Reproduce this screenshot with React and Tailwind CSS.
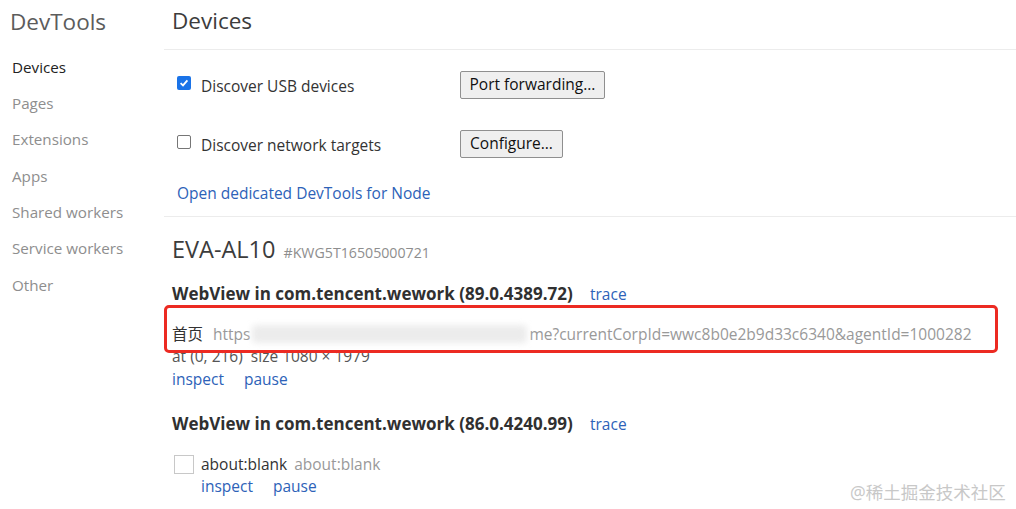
import React from "react";

const font = { fontFamily: '"Open Sans", "Noto Sans CJK SC", sans-serif' };

function NavItem({ label, active }) {
  return (
    <div
      className={`h-[36.3px] flex items-center pl-[12px] text-[15.2px] ${
        active ? "text-[#222]" : "text-[#8e8e8e]"
      }`}
    >
      {label}
    </div>
  );
}

function Checkbox({ checked }) {
  return checked ? (
    <span className="w-[14px] h-[14px] rounded-[2px] bg-[#1a73e8] flex items-center justify-center">
      <svg width="10" height="10" viewBox="0 0 10 10">
        <path d="M1.6 5.2 L4 7.4 L8.4 2.4" stroke="#fff" strokeWidth="1.8" fill="none" />
      </svg>
    </span>
  ) : (
    <span className="w-[14px] h-[14px] rounded-[2px] border border-[#767676] bg-white" />
  );
}

function Btn({ children, w }) {
  return (
    <button
      className={`${w} h-[28px] border border-[#8f8f8f] rounded-[2px] bg-[#efefef] text-[15.5px] text-[#111] flex items-center justify-center`}
    >
      {children}
    </button>
  );
}

export default function App() {
  return (
    <div className="w-[1016px] h-[509px] bg-white flex overflow-hidden relative" style={font}>
      {/* Sidebar */}
      <aside className="w-[164px] shrink-0">
        <h1 className="pl-[10px] pt-[6px] h-[48px] text-[22.5px] text-[#5c5c5c] leading-[32px]">DevTools</h1>
        <nav className="pt-[1px]">
          <NavItem label="Devices" active />
          <NavItem label="Pages" />
          <NavItem label="Extensions" />
          <NavItem label="Apps" />
          <NavItem label="Shared workers" />
          <NavItem label="Service workers" />
          <NavItem label="Other" />
        </nav>
      </aside>

      {/* Main */}
      <main className="flex-1 relative">
        <div className="pl-[8px] border-b border-[#ececec] h-[50px] pt-[6px]">
          <h2 className="text-[22.5px] text-[#3c3c3c] leading-[30px]">Devices</h2>
        </div>

        <div className="pl-[13px] pt-[21px]">
          <div className="flex items-center h-[28px]">
            <div className="w-[24px] flex items-center -mt-[4px]">
              <Checkbox checked />
            </div>
            <span className="w-[259px] text-[15.5px] text-[#333] pt-[3px]">Discover USB devices</span>
            <Btn w="w-[145px]">Port forwarding...</Btn>
          </div>
          <div className="flex items-center h-[28px] mt-[31px]">
            <div className="w-[24px] flex items-center -mt-[4px]">
              <Checkbox />
            </div>
            <span className="w-[259px] text-[15.5px] text-[#333] pt-[3px]">Discover network targets</span>
            <Btn w="w-[103px]">Configure...</Btn>
          </div>
          <div className="mt-[25px] text-[15.5px] text-[#2d62b8] leading-[20px]">Open dedicated DevTools for Node</div>
        </div>

        <div className="mt-[13px] border-t border-[#ececec] pl-[8px]">
          <div className="flex items-baseline gap-[8px] pt-[17px] leading-[30px]">
            <span className="text-[23.5px] text-[#3c3c3c]">EVA-AL10</span>
            <span className="text-[14.2px] text-[#8e8e8e]">#KWG5T16505000721</span>
          </div>

          <div className="flex items-baseline mt-[15px] leading-[22px]">
            <span className="w-[418px] text-[17px] font-bold text-[#303030]">
              WebView in com.tencent.wework (89.0.4389.72)
            </span>
            <span className="text-[15.5px] text-[#2d62b8]">trace</span>
          </div>

          <div className="mt-[18px] flex items-center text-[15.5px] leading-[22px]">
            <span className="text-[#333] w-[41px]">首页</span>
            <span className="text-[#999]">https</span>
            <span className="w-[279px] h-[22px] relative">
              <span className="absolute left-[2px] top-[2px] w-[275px] h-[18px] bg-[#ececec] blur-[3px] rounded-[4px]" />
            </span>
            <span className="text-[#999]">me?currentCorpId=wwc8b0e2b9d33c6340&amp;agentId=1000282</span>
          </div>
          <div className="text-[15.5px] text-[#555] leading-[23px]">at (0, 216)&nbsp; size 1080 × 1979</div>
          <div className="flex gap-[20px] text-[15.5px] text-[#2d62b8] leading-[22px]">
            <span>inspect</span>
            <span>pause</span>
          </div>

          <div className="flex items-baseline mt-[23px] leading-[22px]">
            <span className="w-[418px] text-[17px] font-bold text-[#303030]">
              WebView in com.tencent.wework (86.0.4240.99)
            </span>
            <span className="text-[15.5px] text-[#2d62b8]">trace</span>
          </div>

          <div className="flex mt-[18px] pl-[2px]">
            <span className="w-[20px] h-[19px] border border-[#c8c8c8] mt-[2px]" />
            <div className="pl-[7px]">
              <div className="flex gap-[7px] text-[15.5px] leading-[22px]">
                <span className="text-[#333]">about:blank</span>
                <span className="text-[#999]">about:blank</span>
              </div>
              <div className="flex gap-[20px] text-[15.5px] text-[#2d62b8] leading-[22px]">
                <span>inspect</span>
                <span>pause</span>
              </div>
            </div>
          </div>
        </div>

        {/* red highlight overlay */}
        <div className="absolute left-[0px] top-[305px] w-[834px] h-[48px] border-[3px] border-[#ec2a22] rounded-[5px]" />
      </main>

      <div className="absolute left-[850px] top-[481px] text-[17.5px] text-[#c8c8c8] leading-[22px]">@稀土掘金技术社区</div>
    </div>
  );
}
